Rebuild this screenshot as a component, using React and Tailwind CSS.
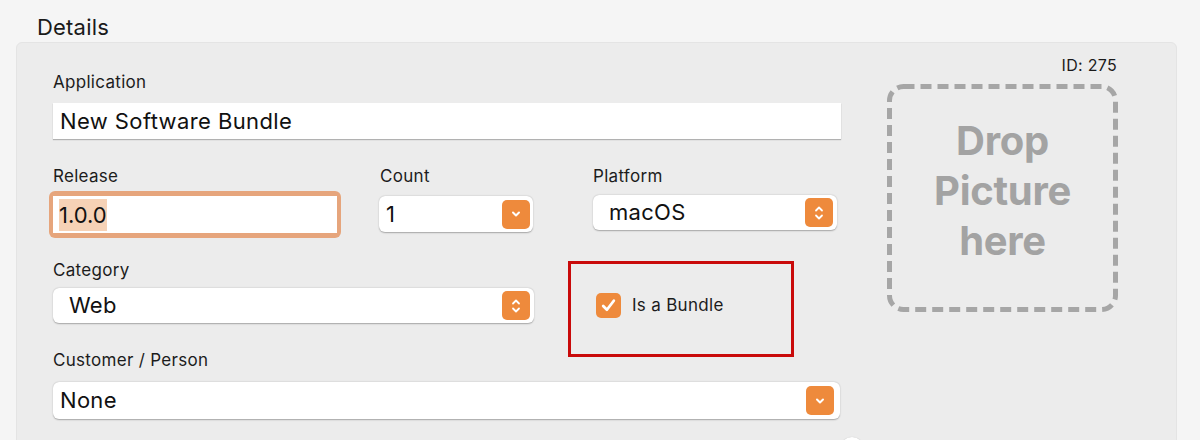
import React from 'react';

const font = { fontFamily: 'Inter, "Liberation Sans", sans-serif' };

const ChevronDown = () => (
  <svg width="12" height="12" viewBox="0 0 12 12" fill="none">
    <path d="M3 4.5 L6 7.5 L9 4.5" stroke="white" strokeWidth="2" strokeLinecap="round" strokeLinejoin="round" />
  </svg>
);

const UpDown = () => (
  <svg width="12" height="18" viewBox="0 0 12 18" fill="none">
    <path d="M3 6.5 L6 3.5 L9 6.5" stroke="white" strokeWidth="1.8" strokeLinecap="round" strokeLinejoin="round" />
    <path d="M3 11.5 L6 14.5 L9 11.5" stroke="white" strokeWidth="1.8" strokeLinecap="round" strokeLinejoin="round" />
  </svg>
);

const Label = ({ children, className = '' }) => (
  <div className={`h-5 text-[17px] leading-5 tracking-[0.3px] text-[#1c1c1c] ${className}`}>{children}</div>
);

const Combo = ({ value, className = '' }) => (
  <div className={`flex items-center h-9 bg-white rounded-[6px] shadow-[0_0.5px_1.5px_rgba(0,0,0,0.3)] pl-[7px] pr-[3px] ${className}`}>
    <span className="flex-1 text-[22px] tracking-[0.3px] text-[#111]">{value}</span>
    <span className="flex items-center justify-center w-[28px] h-[29px] rounded-[5px] bg-[#ee8a3c]">
      <ChevronDown />
    </span>
  </div>
);

const Popup = ({ value, className = '' }) => (
  <div className={`flex items-center h-[35px] bg-white rounded-[6px] shadow-[0_0.5px_1.5px_rgba(0,0,0,0.3)] pl-[16px] pr-[4px] ${className}`}>
    <span className="flex-1 text-[22px] tracking-[0.3px] text-[#111]">{value}</span>
    <span className="flex items-center justify-center w-[28px] h-[29px] rounded-[5px] bg-[#ee8a3c]">
      <UpDown />
    </span>
  </div>
);

export default function App() {
  return (
    <div className="w-[1200px] h-[440px] overflow-hidden bg-[#f5f5f5]" style={font}>
      <div className="pl-[37px] pt-[13px] h-[42px] text-[22px] leading-[28px] tracking-[0.2px] text-[#1a1a1a]">Details</div>
      <div className="ml-[16px] w-[1161px] h-[420px] rounded-[6px] bg-[#ececec] border border-[#e4e4e4] flex">
        {/* form column */}
        <div className="pl-[36px] pt-[29px] w-[824px]">
          <Label>Application</Label>
          <div className="mt-[11px] h-9 bg-white shadow-[0_1px_1px_rgba(0,0,0,0.25)] flex items-center pl-[7px] text-[22px] tracking-[0.4px] text-[#111]">
            New Software Bundle
          </div>

          <div className="flex mt-[27px]">
            <div className="w-[284px]">
              <Label>Release</Label>
              <div className="mt-[5px] -ml-[4px] w-[292px] h-[47px] rounded-[6px] bg-[#e6a57c] p-[5px_4px_5px_4px]">
                <div className="h-full bg-white flex items-center pl-[6px]">
                  <span className="bg-[#f6d2b6] text-[22px] leading-[32px] text-[#111]">1.0.0</span>
                </div>
              </div>
            </div>
            <div className="ml-[42px] w-[154px]">
              <Label className="pl-px">Count</Label>
              <Combo value="1" className="mt-[10px]" />
            </div>
            <div className="ml-[60px] w-[244px]">
              <Label>Platform</Label>
              <Popup value="macOS" className="mt-[9px]" />
            </div>
          </div>

          <div className="flex items-start mt-[22px]">
            <div className="w-[481px]">
              <Label>Category</Label>
              <Popup value="Web" className="mt-[8px]" />
            </div>
            <div className="ml-[34px] mt-[1px] -mb-[6px] w-[226px] h-[96px] border-[3px] border-[#c90a0a] flex items-center pl-[25px] pb-[7px]">
              <span className="flex items-center justify-center w-[25px] h-[25px] rounded-[5px] bg-[#ee8a3c]">
                <svg width="17" height="17" viewBox="0 0 16 16" fill="none">
                  <path d="M3 8.5 L6.5 12 L13 3.5" stroke="white" strokeWidth="2.6" strokeLinecap="round" strokeLinejoin="round" />
                </svg>
              </span>
              <span className="ml-[11px] text-[17px] tracking-[0.3px] text-[#1c1c1c]">Is a Bundle</span>
            </div>
          </div>

          <Label className="mt-[-1px]">Customer / Person</Label>
          <div className="mt-[12px] w-[787px]">
            <Combo value="None" className="h-[37px] pl-[7px] pr-[6px]" />
          </div>
          <div className="mt-[18px] ml-[787px] w-[24px] h-[24px] rounded-full bg-white shadow-[0_0_1px_rgba(0,0,0,0.2)]" />
        </div>

        {/* picture column */}
        <div className="pl-[46px] pt-[14px] w-[300px]">
          <div className="w-[230px] text-right text-[16px] leading-4 tracking-[0.3px] text-[#1a1a1a]">ID: 275</div>
          <div className="relative mt-[11px] w-[231px] h-[228px] flex items-center justify-center pb-[14px]">
            <svg className="absolute inset-0" width="231" height="228" viewBox="0 0 231 228" fill="none">
              <rect x="2.5" y="2.5" width="226" height="223" rx="14" stroke="#a6a6a6" strokeWidth="5" strokeDasharray="11 6" />
            </svg>
            <div className="text-center font-bold text-[40px] leading-[50px] tracking-[-0.3px] text-[#a3a3a3]">
              Drop<br />Picture<br />here
            </div>
          </div>
        </div>
      </div>
    </div>
  );
}
